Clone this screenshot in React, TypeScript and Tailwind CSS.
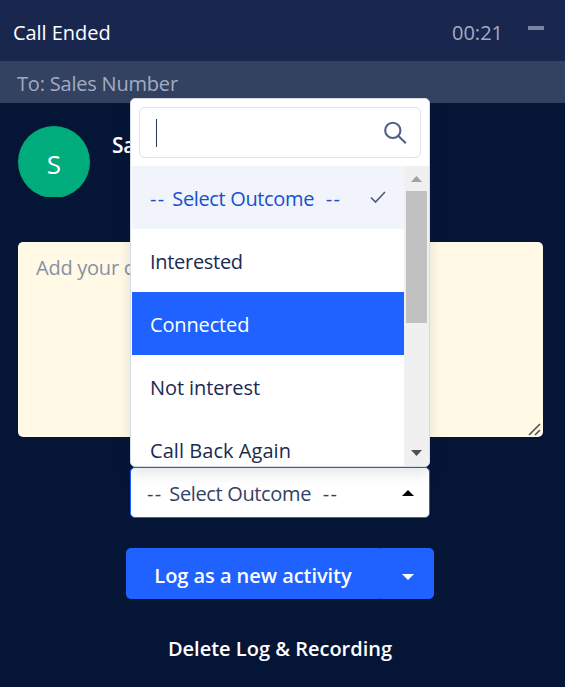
import React, { useState } from "react";

const outcomes = [
  { label: "Select Outcome", placeholder: true, tracking: "" },
  { label: "Interested", tracking: "tracking-[-0.3px]" },
  { label: "Connected", tracking: "tracking-[-0.15px]" },
  { label: "Not interest", tracking: "tracking-[-0.1px]" },
  { label: "Call Back Again", tracking: "tracking-[0.05px]" },
];

const PlaceholderLabel = ({ text }: { text: string }) => (
  <span className="whitespace-nowrap tracking-[-0.35px]">
    <span className="tracking-[1.4px]">-- </span>
    {text}
    <span className="ml-[5px] tracking-[1.4px]"> --</span>
  </span>
);

const OutcomeMenu = () => {
  const [selected, setSelected] = useState(0);
  const [active, setActive] = useState(2);

  return (
    <div className="absolute bottom-full -left-px z-10 mb-px flex h-[369px] w-[300px] flex-col overflow-hidden rounded-[5px] border border-[#d3dbe4] bg-white shadow-[0_6px_14px_rgba(0,30,60,0.12)]">
      <div className="p-2">
        <div className="flex h-[51px] items-center justify-between rounded-[6px] border border-[#dfe1e6] pr-[13px] pl-4">
          <div className="h-7 w-px bg-[#253858]" />
          <svg width="24" height="24" viewBox="0 0 24 24" fill="none" stroke="#505f82" strokeWidth="2.1">
            <circle cx="9.8" cy="9.4" r="7.6" />
            <path d="M15.2 14.8l7.6 7.4" />
          </svg>
        </div>
      </div>
      <div className="flex min-h-0 flex-1">
        <ul className="ml-px flex-1 overflow-hidden">
          {outcomes.map((item, i) => (
            <li
              key={item.label}
              onClick={() => setSelected(i)}
              onMouseEnter={() => setActive(i)}
              className={`flex h-[63px] items-center justify-between pt-[3px] pr-[18px] pl-[18px] ${item.tracking} ${
                i === active
                  ? "bg-[#2062ff] text-white"
                  : i === selected
                    ? "bg-[#f1f4fa] text-[#1650d0]"
                    : "text-[#1b2a50]"
              }`}
            >
              {item.placeholder ? (
                <PlaceholderLabel text={item.label} />
              ) : (
                <span className="whitespace-nowrap">{item.label}</span>
              )}
              {i === selected && (
                <svg className="-mt-1" width="16" height="14" viewBox="0 0 16 14" fill="none" stroke="#4d5a78" strokeWidth="1.6">
                  <path d="M1 7.5l4.5 4.5L15 2" />
                </svg>
              )}
            </li>
          ))}
        </ul>
        <div className="flex w-[25px] flex-col items-center bg-[#f0f0f0]">
          <div className="flex h-[25px] items-center">
            <svg width="11" height="6" viewBox="0 0 11 6" fill="#a3a3a3">
              <path d="M0 6L5.5 0L11 6z" />
            </svg>
          </div>
          <div className="h-[132px] w-[21px] bg-[#c1c1c1]" />
          <div className="mt-auto flex h-[26px] items-center">
            <svg width="11" height="6" viewBox="0 0 11 6" fill="#505050">
              <path d="M0 0L5.5 6L11 0z" />
            </svg>
          </div>
        </div>
      </div>
    </div>
  );
};

const App = () => {
  const [notes, setNotes] = useState("");

  return (
    <div className="flex h-[687px] w-[565px] flex-col overflow-hidden bg-[#051536] font-['Open_Sans',sans-serif] text-[20px] leading-7">
      <header className="flex h-[61px] items-center bg-[#19274f] pt-1 pr-[21px] pl-[13px]">
        <h1 className="font-medium tracking-[-0.05px] text-white">Call Ended</h1>
        <span className="ml-auto text-[#a3abc1]">00:21</span>
        <button className="-mt-[9px] ml-[25px] h-1 w-4 bg-[#7a839f]" aria-label="Minimize" />
      </header>
      <div className="flex h-[42px] items-center bg-[#344261] pt-[3px] pl-[17px] tracking-[-0.2px] text-[#a3abc1]">
        To: Sales Number
      </div>

      <main className="flex flex-1 flex-col px-[18px] pt-[23px]">
        <div className="flex h-[116px] items-start gap-[22px]">
          <div className="h-[71px] overflow-hidden">
            <div className="flex size-[72px] items-center justify-center rounded-full bg-[#00ab7c] pt-[3px] text-[26px] text-white">
              S
            </div>
          </div>
          <p className="pt-[5px] text-[21px] font-semibold tracking-[-0.4px] text-white">Sales Number</p>
        </div>

        <div className="relative h-[195px] w-[525px]">
          <textarea
            value={notes}
            onChange={(e) => setNotes(e.target.value)}
            placeholder="Add your call notes"
            className="h-full w-full resize-none rounded-[5px] bg-[#fff9e6] px-[18px] pt-3 tracking-[-0.25px] outline-none placeholder:text-[#8791a3]"
          />
          <svg className="absolute right-[2px] bottom-[1px]" width="13" height="13" viewBox="0 0 13 13" stroke="#555" strokeWidth="1.7">
            <path d="M1 12L12 1M7 12L12 7" />
          </svg>
        </div>

        <div className="relative mt-[30px] ml-[112px] flex h-[51px] w-[300px] items-center justify-between rounded-[5px] border border-[#2062ff] bg-white pr-[15px] pl-4 text-[#344163]">
          <div className="pt-[2px]">
            <PlaceholderLabel text="Select Outcome" />
          </div>
          <svg width="12" height="6" viewBox="0 0 12 6" fill="#000">
            <path d="M0 6L6 0L12 6z" />
          </svg>
          <OutcomeMenu />
        </div>

        <div className="mt-[30px] ml-[108px] flex h-[51px] w-[308px] text-white">
          <button className="w-[254px] rounded-l-[5px] rounded-r-[1px] bg-[#2062ff] pt-1 font-semibold tracking-[-0.05px]">
            Log as a new activity
          </button>
          <button className="flex flex-1 items-center justify-center rounded-l-[1px] rounded-r-[5px] bg-[#2062ff] pt-[6px] pl-[2px]" aria-label="More">
            <svg width="12" height="6" viewBox="0 0 12 6" fill="#fff">
              <path d="M0 0L6 6L12 0z" />
            </svg>
          </button>
        </div>
        <button className="mt-[36px] mr-[5px] self-center font-semibold text-white">
          Delete Log &amp; Recording
        </button>
      </main>
    </div>
  );
};

export default App;
